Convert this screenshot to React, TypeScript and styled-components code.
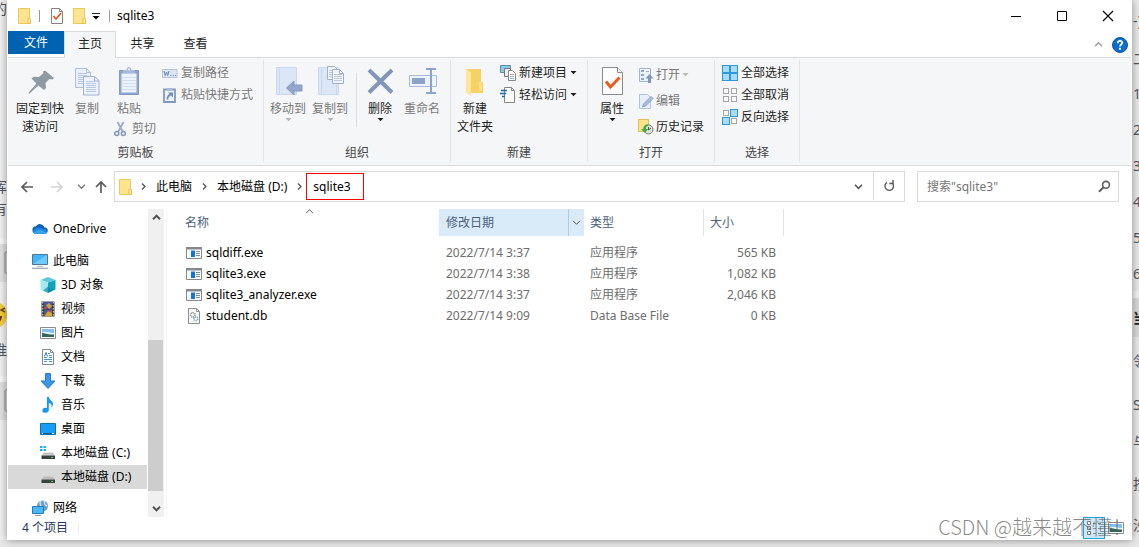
import React from "react";
import styled, { createGlobalStyle, css } from "styled-components";

const GlobalStyle = createGlobalStyle`
  * { box-sizing: border-box; }
  body {
    margin: 0;
    background: #e9e9ea;
    font-family: "Noto Sans", "Noto Sans CJK SC", sans-serif;
    font-size: 12px;
    line-height: 18px;
    color: #000;
  }
  button, input { font: inherit; color: inherit; }
  a { color: inherit; text-decoration: none; }
  svg { display: block; flex: none; }
`;

/* ---------- page behind the window ---------- */

const Desktop = styled.div`
  display: grid;
  grid-template-columns: 7px minmax(0, 1fr) 7px;
  min-height: 100vh;
  padding-bottom: 7px;
  overflow: hidden;
`;

const Strip = styled.div<{ $side: "left" | "right" }>`
  display: flex;
  flex-direction: column;
  overflow: hidden;
  min-width: 0;
  padding-left: ${(p) => (p.$side === "left" ? 0 : 1)}px;
  color: #55555f;
  font-size: 14px;
  background: ${(p) => (p.$side === "left" ? "#f3f3f3" : "#ececed")};
`;

const StripLine = styled.div<{ $h: number; $tone?: string; $end?: boolean; $bold?: boolean }>`
  flex: none;
  display: flex;
  align-items: center;
  justify-content: ${(p) => (p.$end ? "flex-end" : "flex-start")};
  height: ${(p) => p.$h}px;
  overflow: hidden;
  white-space: nowrap;
  background: ${(p) => p.$tone || "transparent"};
  font-weight: ${(p) => (p.$bold ? 700 : 400)};
  color: ${(p) => (p.$bold ? "#222" : "inherit")};
`;

/* ---------- window ---------- */

const Window = styled.main`
  position: relative;
  z-index: 1;
  display: flex;
  flex-direction: column;
  min-width: 0;
  padding: 0 1px;
  background: #fff;
  box-shadow: 0 0 9px rgba(0, 0, 0, 0.42);
`;

const plainButton = css`
  display: flex;
  align-items: center;
  justify-content: center;
  padding: 0;
  border: 0;
  background: transparent;
`;

const TitleBar = styled.header`
  display: flex;
  align-items: center;
  height: 31px;
  padding-left: 8px;
`;

const QuickButton = styled.button<{ $w: number }>`
  ${plainButton}
  width: ${(p) => p.$w}px;
  height: 24px;
`;

const TitleDivider = styled.span<{ $left?: number }>`
  width: 1px;
  height: 12px;
  margin-left: ${(p) => p.$left || 0}px;
  background: #999;
`;

const WindowTitle = styled.h1`
  flex: 1;
  margin: 0 0 0 7px;
  font-size: 12px;
  font-weight: 400;
`;

const CaptionButton = styled.button`
  ${plainButton}
  width: 46px;
  height: 31px;
`;

const TabBar = styled.nav`
  display: flex;
  height: 27px;
  box-shadow: inset 0 -1px #dadbdc;
`;

const FileTab = styled.button`
  ${plainButton}
  width: 56px;
  height: 23px;
  background: #0063b1;
  color: #fff;
`;

const Tab = styled.button<{ $active?: boolean }>`
  ${plainButton}
  width: ${(p) => (p.$active ? 52 : 53)}px;
  height: 27px;
  padding-bottom: 2px;
  color: #222;
  ${(p) =>
    p.$active &&
    css`
      border: 1px solid #dadbdc;
      border-bottom: 0;
      background: #f5f6f7;
    `}
`;

const TabTools = styled.div`
  display: flex;
  align-items: center;
  gap: 9px;
  margin-left: auto;
  padding-right: 3px;
`;

const ToolButton = styled.button`
  ${plainButton}
`;

/* ---------- ribbon ---------- */

const Ribbon = styled.section`
  display: flex;
  height: 108px;
  padding: 2px 0 3px;
  background: #f5f6f7;
  border-bottom: 1px solid #dadbdc;
`;

const Group = styled.div<{ $w: number }>`
  display: flex;
  flex-direction: column;
  flex: none;
  width: ${(p) => p.$w}px;
  border-right: 1px solid #e2e3e4;
`;

const GroupBody = styled.div<{ $pad?: number }>`
  display: flex;
  align-items: flex-start;
  height: 85px;
  padding-left: ${(p) => p.$pad || 0}px;
`;

const GroupLabel = styled.div`
  text-align: center;
  color: #444;
`;

const BigButton = styled.button<{ $w: number; $off?: boolean }>`
  ${plainButton}
  flex-direction: column;
  flex: none;
  width: ${(p) => p.$w}px;
  margin-top: 6px;
  color: ${(p) => (p.$off ? "#7a7a7a" : "#1e1e1e")};
  white-space: nowrap;
  svg + span { margin-top: 2px; }
`;

const PasteColumn = styled.div`
  flex: none;
  width: 56px;
  padding-left: 7px;
`;

const SmallColumn = styled.div<{ $left?: number }>`
  margin: 2px 0 0 ${(p) => p.$left || 0}px;
`;

const SmallButton = styled.button<{ $off?: boolean; $tall?: boolean }>`
  ${plainButton}
  gap: ${(p) => (p.$tall ? 2 : 3)}px;
  height: ${(p) => (p.$tall ? 26 : 22)}px;
  color: ${(p) => (p.$off ? "#7a7a7a" : "#1e1e1e")};
  white-space: nowrap;
`;

const RibbonDivider = styled.span`
  width: 1px;
  height: 54px;
  margin: 13px 5px 0;
  background: #dcdddf;
`;

/* ---------- address row ---------- */

const AddressRow = styled.div`
  display: flex;
  align-items: center;
  padding: 5px 12px 7px 4px;
`;

const NavButton = styled.button<{ $w: number }>`
  ${plainButton}
  width: ${(p) => p.$w}px;
  height: 31px;
`;

const AddressBox = styled.div`
  display: flex;
  align-items: center;
  flex: 1;
  min-width: 0;
  height: 31px;
  margin-left: 2px;
  padding-left: 3px;
  border: 1px solid #d9d9d9;
`;

const Crumb = styled.button<{ $marked?: boolean }>`
  ${plainButton}
  height: 27px;
  padding: 0 6px;
  white-space: nowrap;
  ${(p) =>
    p.$marked &&
    css`
      padding: 0 12px 0 6px;
      border: 1px solid #ff0000;
    `}
`;

const CrumbArrow = styled.span`
  display: flex;
  justify-content: center;
  width: 13px;
`;

const FolderSlot = styled.span`
  display: flex;
  width: 19px;
`;

const AddressEnd = styled.div`
  display: flex;
  margin-left: auto;
`;

const RefreshButton = styled(NavButton)`
  height: 29px;
  border-left: 1px solid #d9d9d9;
`;

const SearchBox = styled.label`
  display: flex;
  align-items: center;
  width: 202px;
  height: 31px;
  margin-left: 12px;
  padding: 0 7px 0 9px;
  border: 1px solid #d9d9d9;
`;

const SearchInput = styled.input`
  flex: 1;
  min-width: 0;
  padding: 0;
  border: 0;
  outline: 0;
  background: transparent;
  &::placeholder { color: #757575; opacity: 1; }
`;

/* ---------- body ---------- */

const Body = styled.div`
  display: flex;
  flex: 1;
`;

const Sidebar = styled.nav`
  width: 139px;
  padding-top: 8px;
`;

const SideLink = styled.a<{ $nested?: boolean; $active?: boolean; $gap?: boolean; $last?: boolean }>`
  display: flex;
  align-items: center;
  gap: 5px;
  height: ${(p) => (p.$last ? 20 : 24)}px;
  margin-top: ${(p) => (p.$gap ? 8 : 0)}px;
  padding-top: ${(p) => (p.$last ? 2 : 0)}px;
  padding-left: ${(p) => (p.$nested ? 32 : 24)}px;
  background: ${(p) => (p.$active ? "#d9d9d9" : "transparent")};
  white-space: nowrap;
`;

const ScrollTrack = styled.div`
  display: flex;
  flex-direction: column;
  width: 16px;
  margin-left: 1px;
  background: #f0f0f0;
`;

const ScrollArrow = styled.button`
  ${plainButton}
  height: 17px;
`;

const ScrollSpace = styled.div<{ $grow: number }>`
  flex: ${(p) => p.$grow} 0 0;
`;

const ScrollThumb = styled.div`
  flex: 151 0 0;
  margin-right: 1px;
  background: #cdcdcd;
`;

const FilePane = styled.div`
  flex: 1;
  min-width: 0;
  margin-left: 2px;
  padding-left: 11px;
  border-left: 1px solid #f5f5f5;
`;

const FileTable = styled.table`
  table-layout: fixed;
  width: 606px;
  border-collapse: separate;
  border-spacing: 0;
  tbody::before { content: ""; display: block; height: 6px; }
`;

const Head = styled.th<{ $w: number; $hot?: boolean; $line?: boolean }>`
  position: relative;
  width: ${(p) => p.$w}px;
  height: 27px;
  padding: 0 0 0 ${(p) => (p.$hot ? 7 : 6)}px;
  text-align: left;
  font-weight: 400;
  color: #4c607a;
  background: ${(p) => (p.$hot ? "#d9ebf9" : "transparent")};
  border-right: ${(p) => (p.$line ? "1px solid #e3e3e3" : "0")};
`;

const NameHead = styled(Head)`
  padding-left: 7px;
`;

const SortMark = styled.span`
  position: absolute;
  top: -2px;
  left: 50%;
  margin-left: -4px;
`;

const HeadRow = styled.div`
  display: flex;
  align-items: center;
  justify-content: space-between;
  height: 27px;
`;

const HeadDrop = styled.button`
  ${plainButton}
  width: 16px;
  height: 27px;
  border-left: 1px solid #b5cbdd;
`;

const Cell = styled.td<{ $left?: number; $right?: boolean }>`
  height: 21px;
  padding: 0 8px 0 ${(p) => p.$left || 6}px;
  color: #6d6d6d;
  text-align: ${(p) => (p.$right ? "right" : "left")};
  white-space: nowrap;
`;

const FileName = styled.span`
  display: flex;
  align-items: center;
  gap: 4px;
  color: #000;
`;

const StatusBar = styled.footer`
  display: flex;
  align-items: center;
  height: 23px;
  padding: 0 4px 2px 14px;
  color: #26395c;
`;

const StatusDivider = styled.span`
  width: 1px;
  height: 12px;
  margin-left: 10px;
  background: #eee;
`;

const ViewButtons = styled.div`
  display: flex;
  align-items: center;
  margin-left: auto;
`;

const ViewButton = styled.button<{ $on?: boolean }>`
  ${plainButton}
  width: 22px;
  height: 22px;
  border: 1px solid ${(p) => (p.$on ? "#26a0da" : "transparent")};
  background: ${(p) => (p.$on ? "#cce8f6" : "transparent")};
`;

const Watermark = styled.div`
  position: absolute;
  right: 0;
  bottom: 0;
  font-size: 20px;
  line-height: 26px;
  font-family: "Noto Sans CJK SC", sans-serif;
  font-weight: 300;
  color: rgba(90, 90, 90, 0.72);
  pointer-events: none;
  white-space: nowrap;
`;

/* ---------- icons ---------- */

const S = ({ w = 16, h = 16, vb, children }: { w?: number; h?: number; vb?: string; children: React.ReactNode }) => (
  <svg width={w} height={h} viewBox={vb || `0 0 ${w} ${h}`} fill="none" aria-hidden="true">
    {children}
  </svg>
);

const Folder = () => (
  <S>
    <path d="M1.500.500h11v10.500h1v4.500h-12z" fill="#ffe48f" stroke="#ecc95c" />
    <path d="M12.500 10.500h-1.500v5h2.500v-4.500z" fill="#fff0b8" stroke="#e6bd4a" />
  </S>
);

const CheckDoc = () => (
  <S>
    <path d="M2.500.500h8l3 3v12h-11z" fill="#fdfdfd" stroke="#828282" />
    <path d="M10.500.500v3h3" stroke="#828282" />
    <path d="m4.500 8 2.500 3 5-6" stroke="#e8541a" strokeWidth="1.700" />
  </S>
);

const Caret = ({ color = "#1e1e1e" }: { color?: string }) => (
  <S w={7} h={4}>
    <path d="M.5 0h6l-3 3.200z" fill={color} />
  </S>
);

const QuickCaret = () => (
  <S w={8} h={8}>
    <path d="M0 1.500h8" stroke="#222" />
    <path d="M.5 4h7L4 7.500z" fill="#000" />
  </S>
);

const Chevron = ({ d, color = "#555", w = 1.3 }: { d: "up" | "down" | "right"; color?: string; w?: number }) => (
  <S w={9} h={9}>
    <path
      d={d === "up" ? "m1 6.200 3.500-3.500L8 6.200" : d === "down" ? "m1 2.800 3.500 3.500L8 2.800" : "m3 1.500 3 3-3 3"}
      stroke={color}
      strokeWidth={w}
    />
  </S>
);

const Help = () => (
  <S>
    <circle cx="8" cy="8" r="7.500" fill="#0a6fcf" stroke="#1c4f8c" />
    <path d="M5.700 6.200C5.700 3 10.400 3.200 10.200 6c-.1 1.500-2.200 1.700-2.200 3.500" stroke="#fff" strokeWidth="1.800" />
    <path d="M7 10.800h2v1.900H7z" fill="#fff" />
  </S>
);

const Pin = () => (
  <S w={32} h={32}>
    <path d="m21 4.500 9 7.500-1.500 1.500-3-.5-4 4 .5 5-2 2-5.500-4.500-9 8-1 0 .5-1.500 7.500-8.500-5-5 2-1.800 5.500.3 4.500-4-.5-1.500z" fill="#8e9ba3" />
  </S>
);

const docLines = (x: number, y: number, n: number, w: number) =>
  Array.from({ length: n }, (_, i) => <path key={i} d={`M${x} ${y + i * 2 + 0.5}h${w}`} stroke="#b9c8e0" />);

const Copy = () => (
  <S w={32} h={32}>
    <path d="M4.500 2.500h11l4 4v15h-15z" fill="#eaf0fa" stroke="#aebfda" />
    <path d="M15.500 2.500v4h4" stroke="#aebfda" />
    {docLines(7, 7, 6, 9)}
    <path d="M12.500 10.500h11l4.500 4v14.500H12.500z" fill="#eef3fb" stroke="#9fb2d2" />
    <path d="M23.500 10.500v4.500h4.500" stroke="#9fb2d2" />
    {docLines(15, 15, 6, 10)}
  </S>
);

const Paste = () => (
  <S w={32} h={32}>
    <path d="M6.500 4.500h19v24h-19z" fill="#8fa5cb" stroke="#8499bf" />
    <path d="M8.500 7.500h15v19h-15z" fill="#edf3fb" />
    {[11, 14, 17, 20, 23].map((y) => (
      <path key={y} d={`M9 ${y}.5h14`} stroke="#d3def0" />
    ))}
    <path d="M10 7V4h3.500c.5-4 4.500-4 5 0H22v3z" fill="#a9bbda" />
    <circle cx="16" cy="3.500" r="1" fill="#f5f6f7" />
  </S>
);

const Scissors = () => (
  <S>
    <path d="m4.500 1 5.500 10M10.500 1 5 11" stroke="#98a9c6" strokeWidth="1.800" />
    <circle cx="3.800" cy="12.500" r="2" stroke="#8196bd" strokeWidth="1.500" />
    <circle cx="10.300" cy="12.500" r="2" stroke="#8196bd" strokeWidth="1.500" />
  </S>
);

const CopyPath = () => (
  <S>
    <path d="M.5 4.500h14.500v8H.5z" fill="#dbe5f4" stroke="#b4c3dc" />
    <path d="m2 6 1.300 4.500L4.500 7l1.200 3.500L7 6M8.500 10.500h1M10.700 10.500h1M12.900 10.500h1" stroke="#6e84ab" />
  </S>
);

const PasteLink = () => (
  <S>
    <path d="M2 2.500h11v12.500H2z" fill="#eef3fb" stroke="#8499bf" strokeWidth="1.800" />
    <path d="M5 1h5v2.500H5z" fill="#a9bbda" />
    <path d="M5.500 12.500c0-3 .5-4 3-4.500" stroke="#7289b5" strokeWidth="1.800" />
    <path d="M6 5.500h5v5z" fill="#7289b5" />
  </S>
);

const MoveTo = () => (
  <S w={32} h={32}>
    <path d="M4.500 1.500h20v27h-20z" fill="#dbe6f6" stroke="#cad8ec" />
    <path d="M7.500 2v26" stroke="#cad8ec" />
    <path d="m14.500 22 7.500-7v4h8v6h-8v4z" fill="#94a7cb" stroke="#8499bf" />
  </S>
);

const CopyTo = () => (
  <S w={32} h={32}>
    <path d="M4.500 1.500h20v27h-20z" fill="#dbe6f6" stroke="#cad8ec" />
    <path d="M7.500 2v26M22.500 18v11" stroke="#cad8ec" />
    <path d="M13.500.500h7l3 3v10h-10z" fill="#f2f6fc" stroke="#9fb2d2" />
    {docLines(15, 4, 4, 4)}
    <path d="M18.500 3.500h7l4 4v10h-11z" fill="#f2f6fc" stroke="#9fb2d2" />
    <path d="M25.500 3.500v4h4" stroke="#9fb2d2" />
    {docLines(20, 8, 4, 8)}
  </S>
);

const Delete = () => (
  <S w={32} h={32}>
    <path d="m5 4 23 22.500M28 4 5 26.500" stroke="#8296bb" strokeWidth="4" />
  </S>
);

const Rename = () => (
  <S w={32} h={32}>
    <path d="M3.500 9.500h27v11h-27z" fill="#edf3fb" stroke="#a9bbda" />
    <path d="M6 12h13v6H6z" fill="#8ea3c9" />
    <path d="M20 3h10M25 4v23M20 27h10" stroke="#8ea3c9" strokeWidth="2" />
  </S>
);

const NewFolder = () => (
  <S w={32} h={32}>
    <path d="M7 3h15v13h2v11H11z" fill="#f8d165" />
    <path d="m7 3 5 3.500V30l-5-3.500z" fill="#ffe69b" />
    <path d="M20 16h3v9h-3z" fill="#ffdf83" />
  </S>
);

const NewItem = () => (
  <S>
    <path d="M.5.500h10v7H.5z" fill="#8ccbe6" stroke="#5c8ca5" />
    <path d="M4.500 3.500h6v8h-6z" fill="#eee" stroke="#777" />
    <path d="M8.500 5.500h4l3 3v7h-7z" fill="#fff" stroke="#888" />
    <path d="M10 9.500h4" stroke="#e88" />
    <path d="M10 11.500h4M10 13.500h4" stroke="#89b7df" />
  </S>
);

const EasyAccess = () => (
  <S>
    <path d="M4.500.500h7l3 3v12h-10z" fill="#fff" stroke="#858585" />
    <path d="M11.500.500v3h3" stroke="#858585" />
    <path d="M1 3.500h6M0 6.500h6M2 9.500h3" stroke="#1c68b0" strokeWidth="1.500" />
  </S>
);

const Properties = () => (
  <S w={32} h={32}>
    <path d="M6.500 1.500h15l5 5v22h-20z" fill="#fff" stroke="#8a8a8a" />
    <path d="M21.500 1.500v5h5" fill="#eee" stroke="#8a8a8a" />
    <path d="m10 15.500 4.500 5.500 9-9.500" stroke="#ee5a1c" strokeWidth="3" />
  </S>
);

const Open = () => (
  <S>
    <path d="M1.500 1.500h11v13h-11z" fill="#edf3fb" stroke="#a3b4d2" />
    <path d="M3 3h3v2H3zM3 7h3v2H3zM3 11h3v2H3z" fill="#8ea3c9" />
    <path d="M8 4.500h3" stroke="#a3b4d2" />
    <path d="m11.500 7 4 4.500h-2.500V16h-3v-4.500H7.500z" fill="#8296bb" />
  </S>
);

const Edit = () => (
  <S>
    <path d="M1.500 1.500h8l3 3v11h-11z" fill="#e6eef9" stroke="#b3c2dc" />
    <path d="m4.500 14 1-3 7.500-7.500 2 2-7.500 7.500z" fill="#a9bbda" stroke="#8fa3c6" />
  </S>
);

const History = () => (
  <S>
    <path d="M.5.500h10v12H.5z" fill="#ffe38c" stroke="#e2bf52" />
    <circle cx="10.500" cy="10.500" r="4.500" fill="#dedede" stroke="#777" />
    <path d="M10.500 8v3l2.500-2" stroke="#555" />
    <path d="M10 5.500C6.500 5 5 8 5.500 10H3l4 4 3-4H8c0-2 .5-3 2-3z" fill="#3cb043" />
  </S>
);

const Grid = ({ on }: { on: [boolean, boolean, boolean, boolean] }) => (
  <S>
    {([[0, 0], [1, 0], [0, 1], [1, 1]] as const).map(([x, y], i) =>
      on[i] ? (
        <rect key={i} x={x * 8 + 0.5} y={y * 8 + 0.5} width="7" height="7" fill="#a9dbfb" stroke="#2f96df" />
      ) : (
        <rect key={i} x={x * 8 + 1.5} y={y * 8 + 1.5} width="5" height="5" fill="#fdfdfd" stroke="#a5a5a5" />
      )
    )}
  </S>
);

const Arrow = ({ dir, color }: { dir: "left" | "right" | "up"; color: string }) => (
  <S w={14} h={14}>
    <path
      d={dir === "left" ? "M13 7H2M7 2 2 7l5 5" : dir === "right" ? "M1 7h11M7 2l5 5-5 5" : "M7 13V2M2 7l5-5 5 5"}
      stroke={color}
      strokeWidth="1.700"
    />
  </S>
);

const Refresh = () => (
  <S w={12} h={12}>
    <path d="M9 2.800A4.300 4.300 0 1 1 4 2.400" stroke="#5a5a5a" strokeWidth="1.400" />
    <path d="M6.300 3.500H10V0" stroke="#5a5a5a" strokeWidth="1.400" />
  </S>
);

const Magnifier = () => (
  <S w={13} h={13}>
    <circle cx="8" cy="4.800" r="3.400" stroke="#5e5e5e" strokeWidth="1.600" />
    <path d="M5.500 7.200 1 11.700" stroke="#5e5e5e" strokeWidth="2" />
  </S>
);

const OneDrive = () => (
  <S>
    <path d="M4 12.500a3.600 3.600 0 0 1 0-7.200 4.700 4.700 0 0 1 8.500 1.200 3 3 0 0 1 .5 6z" fill="#0f5fb8" />
    <path d="M5 6.500c4-.5 6 2 8 1.500a2.600 2.600 0 0 1 0 5H4c-3.500 0-4-4.500 1-6.500z" fill="#1f86d8" />
    <path d="m1.200 11.500 7-2.700 6.500 3c-.5.700-1.200.9-2 .9H3.700c-1 0-2-.4-2.500-1.200z" fill="#34a7ee" />
  </S>
);

const Computer = () => (
  <S>
    <path d="M.5 1.500h15v10H.5z" fill="#41b4fb" stroke="#4d7894" />
    <path d="M1 11 15 2v9z" fill="#74cbff" />
    <path d="M5 13.500h6" stroke="#b0bcc4" />
    <path d="M0 15.300h16" stroke="#8296a5" />
  </S>
);

const Cube = () => (
  <S>
    <path d="m8 0 7.500 3L8 5.500.5 3z" fill="#5cc9da" />
    <path d="M.5 3 8 5.500V16L.5 12.500z" fill="#a7e9f0" />
    <path d="M15.500 3 8 5.500V16l7.500-3.500z" fill="#12a2bb" />
    <path d="m3 13.500 5-4 5 4L8 16z" fill="#0c8ca6" opacity=".7" />
  </S>
);

const Video = () => (
  <S>
    <path d="M1.500.500h13v15h-13z" fill="#3b3b3b" />
    <path d="M4 1h8v7H4z" fill="#4459a8" />
    <path d="M4 8.500h8V15H4z" fill="#3d5a9d" />
    <path d="M6 4.500 9 2l3 3-3 3zM5 14l3-4 4 2v3H5z" fill="#d5a42f" />
    <path d="M4 6h3v2H4zM9 9h3v2H9z" fill="#b64c47" />
    <path d="M2.700 1v14M13.300 1v14" stroke="#e2e2e2" strokeDasharray="1.500 1.500" />
  </S>
);

const Picture = () => (
  <S>
    <path d="M.5 2.500h15v11H.5z" fill="#fff" stroke="#8a8a8a" />
    <path d="M2 4h12v8H2z" fill="#82bff1" />
    <path d="M2 7.500c3-2 6 0 12 .5v2H2z" fill="#e8f3fa" />
    <path d="M2 8c3 0 6 2 12 1.500V12H2z" fill="#34665a" />
  </S>
);

const DocIcon = () => (
  <S>
    <path d="M2.500.500h8l3 3v12h-11z" fill="#fff" stroke="#808c94" />
    <path d="M10.500.500v3h3" stroke="#808c94" />
    <path d="M8 4.500h2M4 8.500h3M9 6.500h3M9 8.500h3M4 10.500h8M4 12.500h3M9 12.500h3" stroke="#4593cf" />
    <path d="m4.500 7.500 1.500-4 1.500 4" stroke="#2a7ec2" />
  </S>
);

const Download = () => (
  <S>
    <path d="M5.500.500h5v7.500h4.500l-7 7.500-7-7.500h4.500z" fill="#3b97e6" stroke="#2a7ac5" />
  </S>
);

const Music = () => (
  <S>
    <path d="M7 0h1.800c.4 3.500 4.700 4 4.200 7.500-.2 1.500-.8 2.500-1.700 3.200.8-2.700 0-4.200-2.500-5v7.800c-.3 2.500-5.300 3.300-6.300 1C1.800 12 4 10 7 11z" fill="#149af3" />
  </S>
);

const DesktopIcon = () => (
  <S>
    <path d="M.5 2.500h15v11H.5z" fill="#169df8" stroke="#0f6fb3" />
    <path d="M1.500 12.500h13" stroke="#0c5d99" />
    <path d="M2 12.500h1M12 12.500h2" stroke="#fff" />
  </S>
);

const Drive = ({ system }: { system?: boolean }) => (
  <S>
    {system && <path d="M0 1h2.500v2H0zM3.500 1H6v2H3.500zM0 4h2.500v2H0zM3.500 4H6v2H3.500z" fill="#18aef0" />}
    <path d="M4 7.500h8.500l2.500 3H1.500z" fill={system ? "#c6c6c6" : "#bcbcbc"} />
    <path d="M1.500 10.500H15V14H1.500z" fill="#3d4142" />
    <path d="M11 12.500h2" stroke="#43e05c" />
  </S>
);

const Network = () => (
  <S>
    <circle cx="10.500" cy="6" r="5.500" fill="#6a9ec0" />
    <path d="M9 1c-3 3 1 4 0 7M12 1c1 2-1 3 3 5" stroke="#c9e2ef" strokeWidth="1.500" />
    <path d="M.5 6.500h11v7H.5z" fill="#4ab8f8" stroke="#1f7cb8" />
    <path d="M3 15.500h6" stroke="#8c9ba5" />
  </S>
);

const Exe = () => (
  <S>
    <path d="M.5 2.500h15v11H.5z" fill="#fff" stroke="#84898e" />
    <path d="M0 2h16v2.500H0z" fill="#84898e" />
    <path d="M5 5.500h4V12H5z" fill="#0a78d6" />
    <path d="M10 6.500h4M10 8.500h4M10 10.500h4" stroke="#888" />
  </S>
);

const Db = () => (
  <S>
    <path d="M2.500.500h8l3 3v12h-11z" fill="#f8f8f8" stroke="#8e8e8e" />
    <path d="M10.500.500v3h3" stroke="#8e8e8e" />
    <circle cx="6.800" cy="7" r="2.200" stroke="#8f989f" strokeWidth="1.600" strokeDasharray="1.200 .6" />
    <circle cx="9.800" cy="10.800" r="1.900" stroke="#83adc6" strokeWidth="1.500" strokeDasharray="1.200 .6" />
  </S>
);

const DetailsView = () => (
  <S>
    <path d="M1.500 1.500h3v3h-3zM1.500 6.500h3v3h-3zM1.500 11.500h3v3h-3z" fill="#fff" stroke="#777" />
    <path d="M7 3.500h3M12 3.500h3M7 8.500h3M12 8.500h3M7 13.500h3M12 13.500h3" stroke="#8a8a8a" />
  </S>
);

const Emoji = () => (
  <S w={28} h={28}>
    <circle cx="14" cy="14" r="14" fill="#f6cd3d" />
    <path d="M5 15h18c0 11-18 11-18 0z" fill="#6b3a26" />
    <path d="m26 7-4 2 4 2" stroke="#6b4a1c" strokeWidth="1.500" />
  </S>
);

const PageButton = () => (
  <S w={24} h={24}>
    <rect x="5" y="1" width="26" height="21" rx="2" fill="#ddd" stroke="#b4b4b4" strokeWidth="2" />
  </S>
);

/* ---------- data ---------- */

const places = [
  { name: "OneDrive", icon: <OneDrive /> },
  { name: "此电脑", icon: <Computer />, gap: true },
  { name: "3D 对象", icon: <Cube />, nested: true },
  { name: "视频", icon: <Video />, nested: true },
  { name: "图片", icon: <Picture />, nested: true },
  { name: "文档", icon: <DocIcon />, nested: true },
  { name: "下载", icon: <Download />, nested: true },
  { name: "音乐", icon: <Music />, nested: true },
  { name: "桌面", icon: <DesktopIcon />, nested: true },
  { name: "本地磁盘 (C:)", icon: <Drive system />, nested: true },
  { name: "本地磁盘 (D:)", icon: <Drive />, nested: true, active: true },
  { name: "网络", icon: <Network />, gap: true, last: true },
];

const files = [
  { name: "sqldiff.exe", date: "2022/7/14 3:37", type: "应用程序", size: "565 KB", icon: <Exe /> },
  { name: "sqlite3.exe", date: "2022/7/14 3:38", type: "应用程序", size: "1,082 KB", icon: <Exe /> },
  { name: "sqlite3_analyzer.exe", date: "2022/7/14 3:37", type: "应用程序", size: "2,046 KB", icon: <Exe /> },
  { name: "student.db", date: "2022/7/14 9:09", type: "Data Base File", size: "0 KB", icon: <Db /> },
];

export default function App() {
  return (
    <>
      <GlobalStyle />
      <Desktop>
        <Strip $side="left">
          <StripLine $h={18} $end>的</StripLine>
          <StripLine $h={160} />
          <StripLine $h={18} $end>挥</StripLine>
          <StripLine $h={4} />
          <StripLine $h={18} $end>有</StripLine>
          <StripLine $h={20} />
          <StripLine $h={6} $tone="#fafafa" />
          <StripLine $h={38} $tone="#e2e2e2"><PageButton /></StripLine>
          <StripLine $h={18} />
          <StripLine $h={30} $end><Emoji /></StripLine>
          <StripLine $h={11} />
          <StripLine $h={18} $end>推</StripLine>
          <StripLine $h={17} />
          <StripLine $h={6} $tone="#fafafa" />
          <StripLine $h={38} $tone="#e2e2e2"><PageButton /></StripLine>
        </Strip>

        <Window>
          <TitleBar>
            <QuickButton $w={18} aria-label="文件夹"><Folder /></QuickButton>
            <TitleDivider $left={5} />
            <QuickButton $w={34} aria-label="属性"><CheckDoc /></QuickButton>
            <QuickButton $w={12} aria-label="新建文件夹"><Folder /></QuickButton>
            <QuickButton $w={20} aria-label="自定义快速访问工具栏"><QuickCaret /></QuickButton>
            <TitleDivider $left={3} />
            <WindowTitle>sqlite3</WindowTitle>
            <CaptionButton aria-label="最小化">
              <S w={12} h={12}><path d="M1 6.500h10" stroke="#000" /></S>
            </CaptionButton>
            <CaptionButton aria-label="最大化">
              <S w={12} h={12}><path d="M1.500 1.500h9v9h-9z" stroke="#000" /></S>
            </CaptionButton>
            <CaptionButton aria-label="关闭">
              <S w={12} h={12}><path d="m1 1 10 10M11 1 1 11" stroke="#000" strokeWidth="1.100" /></S>
            </CaptionButton>
          </TitleBar>

          <TabBar>
            <FileTab>文件</FileTab>
            <Tab $active>主页</Tab>
            <Tab>共享</Tab>
            <Tab>查看</Tab>
            <TabTools>
              <ToolButton aria-label="最小化功能区"><Chevron d="up" color="#999" /></ToolButton>
              <ToolButton aria-label="帮助"><Help /></ToolButton>
            </TabTools>
          </TabBar>

          <Ribbon>
            <Group $w={256}>
              <GroupBody $pad={4}>
                <BigButton $w={56}><Pin /><span>固定到快<br />速访问</span></BigButton>
                <BigButton $w={38} $off><Copy /><span>复制</span></BigButton>
                <PasteColumn>
                  <BigButton $w={32} $off><Paste /><span>粘贴</span></BigButton>
                  <SmallButton $off><Scissors />剪切</SmallButton>
                </PasteColumn>
                <SmallColumn>
                  <SmallButton $off><CopyPath />复制路径</SmallButton>
                  <SmallButton $off><PasteLink />粘贴快捷方式</SmallButton>
                </SmallColumn>
              </GroupBody>
              <GroupLabel>剪贴板</GroupLabel>
            </Group>

            <Group $w={187}>
              <GroupBody $pad={3}>
                <BigButton $w={42} $off><MoveTo /><span>移动到</span><Caret color="#b5b5b5" /></BigButton>
                <BigButton $w={42} $off><CopyTo /><span>复制到</span><Caret color="#b5b5b5" /></BigButton>
                <RibbonDivider />
                <BigButton $w={36}><Delete /><span>删除</span><Caret /></BigButton>
                <BigButton $w={48} $off><Rename /><span>重命名</span></BigButton>
              </GroupBody>
              <GroupLabel>组织</GroupLabel>
            </Group>

            <Group $w={137}>
              <GroupBody>
                <BigButton $w={48}><NewFolder /><span>新建<br />文件夹</span></BigButton>
                <SmallColumn $left={1}>
                  <SmallButton><NewItem />新建项目<Caret /></SmallButton>
                  <SmallButton><EasyAccess />轻松访问<Caret /></SmallButton>
                </SmallColumn>
              </GroupBody>
              <GroupLabel>新建</GroupLabel>
            </Group>

            <Group $w={127}>
              <GroupBody>
                <BigButton $w={48}><Properties /><span>属性</span><Caret /></BigButton>
                <SmallColumn $left={2}>
                  <SmallButton $off $tall><Open />打开<Caret color="#b5b5b5" /></SmallButton>
                  <SmallButton $off $tall><Edit />编辑</SmallButton>
                  <SmallButton $tall><History />历史记录</SmallButton>
                </SmallColumn>
              </GroupBody>
              <GroupLabel>打开</GroupLabel>
            </Group>

            <Group $w={85}>
              <GroupBody $pad={7}>
                <SmallColumn>
                  <SmallButton><Grid on={[true, true, true, true]} />全部选择</SmallButton>
                  <SmallButton><Grid on={[false, false, false, false]} />全部取消</SmallButton>
                  <SmallButton><Grid on={[false, true, true, false]} />反向选择</SmallButton>
                </SmallColumn>
              </GroupBody>
              <GroupLabel>选择</GroupLabel>
            </Group>
          </Ribbon>

          <AddressRow>
            <NavButton $w={30} aria-label="后退"><Arrow dir="left" color="#5a5a5a" /></NavButton>
            <NavButton $w={30} aria-label="前进"><Arrow dir="right" color="#d5d5d5" /></NavButton>
            <NavButton $w={18} aria-label="最近浏览的位置"><Chevron d="down" color="#777" /></NavButton>
            <NavButton $w={22} aria-label="向上"><Arrow dir="up" color="#5a5a5a" /></NavButton>
            <AddressBox>
              <FolderSlot><Folder /></FolderSlot>
              <CrumbArrow><Chevron d="right" /></CrumbArrow>
              <Crumb>此电脑</Crumb>
              <CrumbArrow><Chevron d="right" /></CrumbArrow>
              <Crumb>本地磁盘 (D:)</Crumb>
              <CrumbArrow><Chevron d="right" /></CrumbArrow>
              <Crumb $marked>sqlite3</Crumb>
              <AddressEnd>
                <NavButton $w={30} aria-label="以前的位置"><Chevron d="down" w={1.6} /></NavButton>
                <RefreshButton $w={31} aria-label="刷新"><Refresh /></RefreshButton>
              </AddressEnd>
            </AddressBox>
            <SearchBox>
              <SearchInput type="text" placeholder={'搜索"sqlite3"'} aria-label="搜索" />
              <Magnifier />
            </SearchBox>
          </AddressRow>

          <Body>
            <Sidebar>
              {places.map((p) => (
                <SideLink key={p.name} href="#" $nested={p.nested} $active={p.active} $gap={p.gap} $last={p.last}>
                  {p.icon}
                  {p.name}
                </SideLink>
              ))}
            </Sidebar>
            <ScrollTrack>
              <ScrollArrow aria-label="向上滚动"><Chevron d="up" w={2} /></ScrollArrow>
              <ScrollSpace $grow={114} />
              <ScrollThumb />
              <ScrollSpace $grow={9} />
              <ScrollArrow aria-label="向下滚动"><Chevron d="down" w={2} /></ScrollArrow>
            </ScrollTrack>
            <FilePane>
              <FileTable>
                <thead>
                  <tr>
                    <NameHead $w={261}>
                      名称
                      <SortMark><Chevron d="up" w={1} /></SortMark>
                    </NameHead>
                    <Head $w={145} $hot>
                      <HeadRow>
                        修改日期
                        <HeadDrop aria-label="筛选"><Chevron d="down" w={1} /></HeadDrop>
                      </HeadRow>
                    </Head>
                    <Head $w={120} $line>类型</Head>
                    <Head $w={80} $line>大小</Head>
                  </tr>
                </thead>
                <tbody>
                  {files.map((f) => (
                    <tr key={f.name}>
                      <Cell $left={8}><FileName>{f.icon}{f.name}</FileName></Cell>
                      <Cell $left={7}>{f.date}</Cell>
                      <Cell>{f.type}</Cell>
                      <Cell $right>{f.size}</Cell>
                    </tr>
                  ))}
                </tbody>
              </FileTable>
            </FilePane>
          </Body>

          <StatusBar>
            4 个项目
            <StatusDivider />
            <ViewButtons>
              <ViewButton $on aria-label="详细信息"><DetailsView /></ViewButton>
              <ViewButton aria-label="大图标"><Picture /></ViewButton>
            </ViewButtons>
          </StatusBar>
          <Watermark>CSDN @越来越不懂！</Watermark>
        </Window>

        <Strip $side="right">
          <StripLine $h={42}>-)</StripLine>
          <StripLine $h={34}>二</StripLine>
          <StripLine $h={36}>1</StripLine>
          <StripLine $h={36}>2</StripLine>
          <StripLine $h={36}>3</StripLine>
          <StripLine $h={36}>4</StripLine>
          <StripLine $h={36}>5</StripLine>
          <StripLine $h={35}>6</StripLine>
          <StripLine $h={7} $tone="#f4f4f4" />
          <StripLine $h={39} $tone="#dcdcdc" $bold>当</StripLine>
          <StripLine $h={48}>邻</StripLine>
          <StripLine $h={40}>S</StripLine>
          <StripLine $h={34}>与</StripLine>
          <StripLine $h={50}>按</StripLine>
          <StripLine $h={31}>没</StripLine>
        </Strip>
      </Desktop>
    </>
  );
}
